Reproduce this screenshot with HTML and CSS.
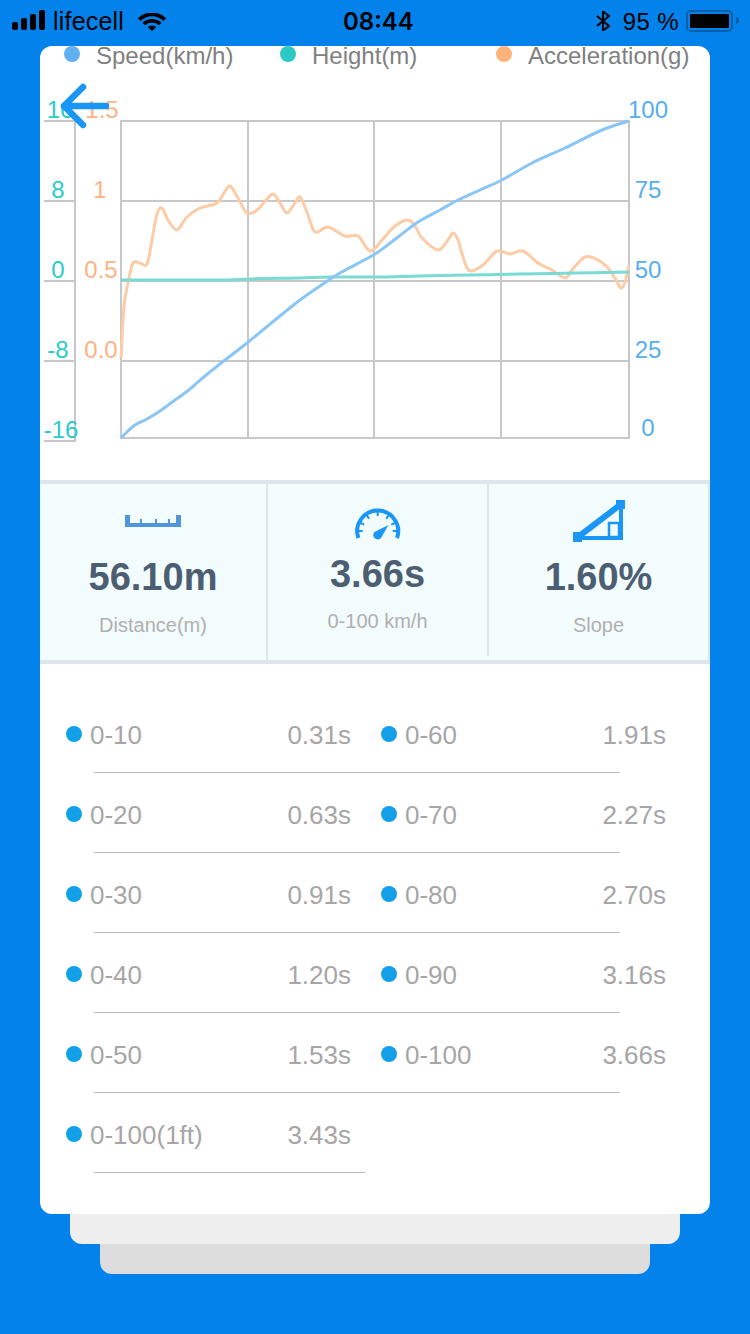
FILE: index.html

```html
<!DOCTYPE html>
<html>
  <head>
    <meta charset="utf-8">
    <title>Test result</title>
    <link rel="stylesheet" href="styles.css">
  </head>
  <body>
    <div class="status">
      <div class="status-left">
        <svg class="signal" width="33" height="20" viewBox="0 0 33 20">
          <rect x="0" y="12" width="6" height="8" rx="2"></rect>
          <rect x="9" y="8" width="6" height="12" rx="2"></rect>
          <rect x="18" y="4" width="6" height="16" rx="2"></rect>
          <rect x="27" y="0" width="6" height="20" rx="2"></rect>
        </svg>
        <span class="carrier">lifecell</span>
        <svg class="wifi" width="28" height="18" viewBox="0 0 28 18">
          <path d="M1.2 6.6A18 18 0 0 1 26.8 6.6" fill="none" stroke="#000" stroke-width="3.8"></path>
          <path d="M5.8 11A12 12 0 0 1 22.2 11" fill="none" stroke="#000" stroke-width="3.6"></path>
          <path d="M9.6 14Q14 11 18.4 14L14 18Z"></path>
        </svg>
      </div>
      <div class="time">08:44</div>
      <div class="status-right">
        <svg class="bluetooth" width="14" height="20" viewBox="0 0 14 20">
          <path d="M1 5L13 15L7 19.5V0.5L13 5L1 15" fill="none" stroke="#000" stroke-width="2"></path>
        </svg>
        <span class="battery-text">95 %</span>
        <div class="battery"><div class="battery-fill"></div></div>
        <div class="battery-nub"></div>
      </div>
    </div>

    <div class="card">
      <div class="chart">
        <svg class="chart-svg" width="670" height="434" viewBox="40 46 670 434">
          <circle cx="72" cy="54" r="8" fill="#5fb0f0"></circle>
          <text class="legend" x="96" y="64">Speed(km/h)</text>
          <circle cx="288" cy="54" r="8" fill="#2bc9c6"></circle>
          <text class="legend" x="312" y="64">Height(m)</text>
          <circle cx="504" cy="54" r="8" fill="#ffb37b"></circle>
          <text class="legend" x="528" y="64">Acceleration(g)</text>

          <path class="grid" d="M44 121H75M44 201H75M44 281H75M44 361H75M44 441H76M75 121V441"></path>
          <path class="grid" d="M121 121H629V438H121ZM121 201H629M121 281H629M121 361H629M248 121V438M374 121V438M501 121V438"></path>

          <text class="axis teal" x="60" y="118">16</text>
          <text class="axis teal" x="58" y="198">8</text>
          <text class="axis teal" x="58" y="278">0</text>
          <text class="axis teal" x="58" y="358">-8</text>
          <text class="axis teal" x="61" y="438">-16</text>

          <text class="axis orange" x="102" y="118">1.5</text>
          <text class="axis orange" x="100" y="198">1</text>
          <text class="axis orange" x="101" y="278">0.5</text>
          <text class="axis orange" x="101" y="358">0.0</text>

          <text class="axis blue" x="648" y="118">100</text>
          <text class="axis blue" x="648" y="198">75</text>
          <text class="axis blue" x="648" y="278">50</text>
          <text class="axis blue" x="648" y="358">25</text>
          <text class="axis blue" x="648" y="436">0</text>

          <path id="line-accel" class="line line-accel"></path>
          <path id="line-height" class="line line-height"></path>
          <path id="line-speed" class="line line-speed"></path>
        </svg>
        <svg class="back" width="56" height="46" viewBox="0 0 56 46">
          <path d="M24 4L5 23L24 42M5 23H47" fill="none" stroke="#1a96f7" stroke-width="6.5" stroke-linecap="round" stroke-linejoin="round"></path>
        </svg>
      </div>

      <div class="stats">
        <div class="stat stat-distance">
          <svg width="56" height="12" viewBox="0 0 56 12">
            <path d="M0 0H5V8H15V4H17V8H30V4H32V8H43V4H45V8H51V0H56V12H0Z" fill="#4f96dc"></path>
          </svg>
          <div class="stat-value">56.10m</div>
          <div class="stat-label">Distance(m)</div>
        </div>
        <div class="stat stat-time">
          <svg width="46" height="32" viewBox="354 508 46 32">
            <path d="M357.4 538A20.5 20.5 0 1 1 396 538" fill="none" stroke="#1a96f7" stroke-width="4"></path>
            <path d="M376.7 511V516M365.2 514.6L368.1 518.7M388.2 514.6L385.3 518.7M358.6 522.5L363.1 524.7M394.8 522.5L390.3 524.7M356.7 531H361.7M396.7 531H391.7" fill="none" stroke="#1a96f7" stroke-width="2"></path>
            <path d="M387.5 525L380 538A4.4 4.4 0 1 1 373.4 532Z" fill="#1a96f7"></path>
          </svg>
          <div class="stat-value">3.66s</div>
          <div class="stat-label">0-100 km/h</div>
        </div>
        <div class="stat stat-slope">
          <svg width="52" height="42" viewBox="572 500 52 42">
            <path d="M577 537L619 505" fill="none" stroke="#1a96f7" stroke-width="6"></path>
            <path d="M577 538H620V505" fill="none" stroke="#1a96f7" stroke-width="4"></path>
            <rect x="608" y="523" width="10" height="14" fill="none" stroke="#1a96f7" stroke-width="2.5"></rect>
            <rect x="572" y="532" width="9" height="10" fill="#1a96f7"></rect>
            <rect x="615" y="500" width="9" height="9" fill="#1a96f7"></rect>
          </svg>
          <div class="stat-value">1.60%</div>
          <div class="stat-label">Slope</div>
        </div>
      </div>

      <div class="list">
        <div class="row">
          <div class="pair">
            <div class="cell"><span class="dot"></span><span>0-10</span><span class="val">0.31s</span></div>
            <div class="cell"><span class="dot"></span><span>0-60</span><span class="val">1.91s</span></div>
          </div>
          <div class="rule"></div>
        </div>
        <div class="row">
          <div class="pair">
            <div class="cell"><span class="dot"></span><span>0-20</span><span class="val">0.63s</span></div>
            <div class="cell"><span class="dot"></span><span>0-70</span><span class="val">2.27s</span></div>
          </div>
          <div class="rule"></div>
        </div>
        <div class="row">
          <div class="pair">
            <div class="cell"><span class="dot"></span><span>0-30</span><span class="val">0.91s</span></div>
            <div class="cell"><span class="dot"></span><span>0-80</span><span class="val">2.70s</span></div>
          </div>
          <div class="rule"></div>
        </div>
        <div class="row">
          <div class="pair">
            <div class="cell"><span class="dot"></span><span>0-40</span><span class="val">1.20s</span></div>
            <div class="cell"><span class="dot"></span><span>0-90</span><span class="val">3.16s</span></div>
          </div>
          <div class="rule"></div>
        </div>
        <div class="row">
          <div class="pair">
            <div class="cell"><span class="dot"></span><span>0-50</span><span class="val">1.53s</span></div>
            <div class="cell"><span class="dot"></span><span>0-100</span><span class="val">3.66s</span></div>
          </div>
          <div class="rule"></div>
        </div>
        <div class="row">
          <div class="pair">
            <div class="cell"><span class="dot"></span><span>0-100(1ft)</span><span class="val">3.43s</span></div>
          </div>
          <div class="rule rule-short"></div>
        </div>
      </div>
    </div>
    <div class="under under-one"></div>
    <div class="under under-two"></div>

    <script src="chart.js"></script>
  </body>
</html>
```

FILE: styles.css

```css
* {
  box-sizing: border-box;
}

body {
  margin: 0;
  height: 1334px;
  overflow: hidden;
  background-color: #0482eb;
  font-family: "Liberation Sans", Arial, sans-serif;
}

.status {
  display: grid;
  grid-template-columns: 331px 70px 1fr;
  align-items: center;
  height: 46px;
  padding: 0 11px 3px 12px;
  color: #000;
}

.status-left {
  display: flex;
  align-items: center;
}

.signal {
  margin-top: -4px;
}

.carrier {
  margin-left: 8px;
  font-size: 25px;
  letter-spacing: 0.2px;
}

.wifi {
  margin-left: 14px;
}

.time {
  font-family: Inter, "Liberation Sans", sans-serif;
  font-size: 24px;
  font-weight: 600;
  white-space: nowrap;
}

.status-right {
  display: flex;
  align-items: center;
  justify-content: flex-end;
}

.bluetooth {
  margin-top: -2px;
}

.battery-text {
  margin-left: 13px;
  font-size: 24px;
  letter-spacing: 0.4px;
}

.battery {
  width: 47px;
  height: 22px;
  margin: -2px 0 0 7px;
  padding: 2px;
  border: 2px solid #0a5fa8;
  border-radius: 5px;
}

.battery-fill {
  height: 100%;
  background-color: #000;
  border-radius: 1px;
}

.battery-nub {
  width: 3px;
  height: 7px;
  margin: -2px 0 0 3px;
  background-color: #0a5fa8;
  border-radius: 0 3px 3px 0;
}

.card {
  width: 670px;
  height: 1168px;
  margin-left: 40px;
  background-color: #fff;
  border-radius: 12px;
}

.chart {
  position: relative;
  height: 434px;
}

.chart-svg {
  display: block;
  overflow: visible;
}

.back {
  position: absolute;
  left: 19px;
  top: 37px;
}

.legend {
  font-size: 24px;
  fill: #808080;
}

.axis {
  font-size: 24px;
  text-anchor: middle;
}

.teal {
  fill: #2bcbcb;
}

.orange {
  fill: #fdb384;
}

.blue {
  fill: #55aef0;
}

.grid {
  fill: none;
  stroke: #c8c8c8;
  stroke-width: 2;
}

.line {
  fill: none;
  stroke-width: 3;
  stroke-linejoin: round;
}

.line-speed {
  stroke: #8ac6f5;
}

.line-height {
  stroke: #7adbd6;
}

.line-accel {
  stroke: #fdcba6;
}

.stats {
  display: flex;
  height: 184px;
  background-color: #f3fcfd;
  border-top: 4px solid #dde6ea;
  border-bottom: 4px solid #dde6ea;
  border-right: 2px solid #dde6ea;
}

.stat {
  display: flex;
  flex-direction: column;
  align-items: center;
}

.stat svg {
  display: block;
}

.stat-distance {
  width: 228px;
  padding-top: 31px;
  border-right: 2px solid #dde6ea;
}

.stat-time {
  width: 221px;
  height: 172px;
  padding-top: 24px;
  border-right: 2px solid #dde6ea;
}

.stat-slope {
  flex: 1;
  padding-top: 16px;
}

.stat-value {
  margin-top: 13px;
  color: #4c5e72;
  font-size: 38px;
  font-weight: bold;
  line-height: 44px;
}

.stat-distance .stat-value {
  margin-top: 28px;
}

.stat-time .stat-value {
  margin-top: 12px;
}

.stat-label {
  margin-top: 14px;
  color: #b0b0b0;
  font-size: 20px;
  line-height: 24px;
}

.stat-time .stat-label {
  margin-top: 13px;
}

.list {
  padding: 29px 0 0 26px;
}

.row {
  height: 80px;
}

.pair {
  display: grid;
  grid-template-columns: 285px 285px;
  column-gap: 30px;
  align-items: center;
  height: 79px;
  padding-top: 5px;
}

.cell {
  display: flex;
  align-items: center;
  color: #a6a6a6;
  font-size: 26px;
}

.dot {
  width: 16px;
  height: 16px;
  margin: -2px 8px 0 0;
  background-color: #14a0e8;
  border-radius: 50%;
}

.val {
  margin-left: auto;
}

.rule {
  width: 526px;
  height: 1px;
  margin-left: 28px;
  background-color: #bbb;
}

.rule-short {
  width: 271px;
}

.under {
  height: 30px;
  border-radius: 0 0 12px 12px;
}

.under-one {
  margin: 0 70px;
  background-color: #eee;
}

.under-two {
  margin: 0 100px;
  background-color: #ddd;
}
```

FILE: chart.js

```js
// Sampled points of the three curves, in page pixels
const speed = [[121,438],[128,431],[135,425],[147,419],[160,411],[175,400],[190,389],[205,376],[225,360],[247,343],[275,320],[300,300],[320,286],[340,273],[375,254],[398,237],[418,222],[440,210],[458,200],[480,190],[502,180],[532,163],[565,148],[602,130],[629,121]];
const height = [[121,280],[180,280],[225,280],[260,278.5],[300,278],[330,277],[375,277],[420,276],[470,275],[520,274],[575,273],[629,272]];
const accel = [[121,358],[124,307],[128,283],[133,263],[140,263],[147,264],[152,240],[157,214],[162,208],[168,220],[177,230],[187,217],[200,208],[217,203],[224,193],[230,186],[238,198],[247,213],[257,210],[266,200],[273,194],[280,203],[287,213],[295,203],[300,197],[307,212],[315,232],[328,227],[345,236],[358,236],[370,251],[382,240],[395,226],[408,220],[415,226],[422,238],[438,250],[448,240],[453,233],[458,240],[464,260],[470,271],[483,265],[497,251],[510,254],[523,251],[538,263],[552,270],[565,278],[572,270],[585,257],[598,260],[608,268],[616,280],[621,288],[625,282],[629,265]];

// Catmull-Rom through the points, written out as cubic segments
function smoothPath(points) {
  let d = "M" + points[0][0] + " " + points[0][1];
  for (let i = 0; i < points.length - 1; i++) {
    const p0 = points[i - 1] || points[i];
    const p1 = points[i];
    const p2 = points[i + 1];
    const p3 = points[i + 2] || p2;
    const c1x = p1[0] + (p2[0] - p0[0]) / 6;
    const c1y = p1[1] + (p2[1] - p0[1]) / 6;
    const c2x = p2[0] - (p3[0] - p1[0]) / 6;
    const c2y = p2[1] - (p3[1] - p1[1]) / 6;
    d += "C" + c1x + " " + c1y + " " + c2x + " " + c2y + " " + p2[0] + " " + p2[1];
  }
  return d;
}

document.getElementById("line-speed").setAttribute("d", smoothPath(speed));
document.getElementById("line-height").setAttribute("d", smoothPath(height));
document.getElementById("line-accel").setAttribute("d", smoothPath(accel));
```
